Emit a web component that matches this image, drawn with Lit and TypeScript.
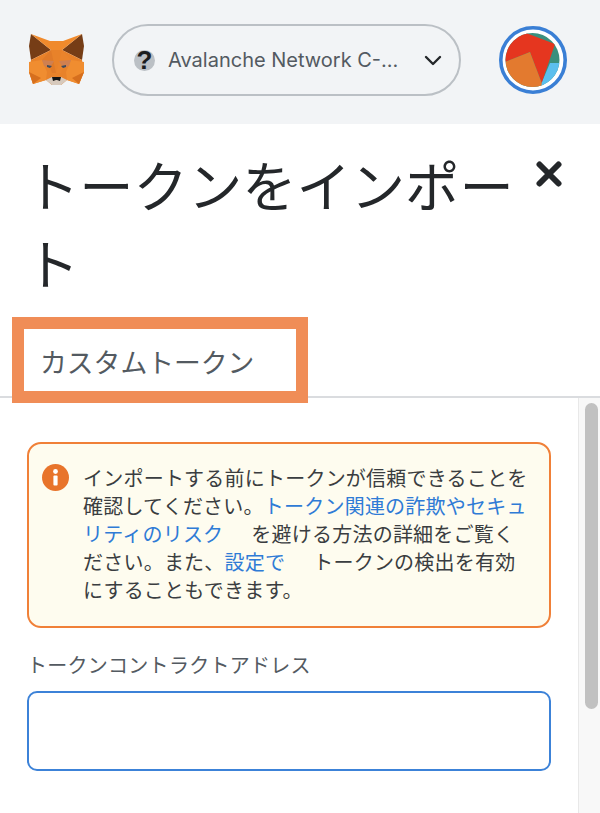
import { LitElement, html, css } from "lit";
import { customElement } from "lit/decorators.js";

@customElement("app-root")
export class AppRoot extends LitElement {
  static styles = css`
    :host {
      display: flex;
      flex-direction: column;
      width: 600px;
      height: 813px;
      overflow: hidden;
      background: #fff;
      font-family: "Noto Sans CJK JP", "Noto Sans", sans-serif;
      color: #24272a;
    }
    .header {
      flex: none;
      height: 124px;
      background: #f2f4f6;
      display: flex;
      align-items: center;
      box-sizing: border-box;
      padding-left: 28px;
    }
    .fox { width: 57px; height: 52px; flex: none; margin-top: -6px; }
    .pill {
      box-sizing: border-box;
      margin-left: 27px;
      width: 349px;
      height: 72px;
      flex: none;
      border: 2px solid #bbc0c5;
      border-radius: 36px;
      display: flex;
      align-items: center;
      padding-left: 20px;
      margin-top: -4px;
    }
    .q {
      width: 21px;
      height: 21px;
      border-radius: 50%;
      background: #bbc0c5;
      color: #1b1d1f;
      font: 700 26px/21px "Liberation Sans", sans-serif;
      text-align: center;
      flex: none;
    }
    .net {
      margin-left: 13px;
      font: 400 20px/24px Inter, "Noto Sans", sans-serif;
      color: #535a61;
      white-space: nowrap;
      width: 237px;
    }
    .chev { width: 18px; height: 11px; flex: none; margin-left: 19px; }
    .avatar { width: 68px; height: 68px; flex: none; margin-left: 38px; margin-top: -4px; }

    .title-row {
      flex: none;
      display: flex;
      align-items: flex-start;
      padding: 21px 0 16px 25px;
    }
    h1 {
      margin: 0;
      width: 501px;
      font-size: 54.3px;
      line-height: 78px;
      font-weight: 400;
      color: #24272a;
    }
    .close { width: 26px; height: 26px; margin: 16px 0 0 10px; flex: none; }

    .tabs {
      flex: none;
      height: 81px;
      box-sizing: border-box;
      border-bottom: 2px solid #dadcdf;
    }
    .tab {
      box-sizing: border-box;
      margin-left: 12px;
      width: 296px;
      height: 86px;
      border: 12px solid #f08d57;
      background: #fff;
      color: #535a61;
      font-size: 26.8px;
      line-height: 62px;
      padding: 2px 0 0 16px;
      white-space: nowrap;
      position: relative;
    }
    .body { flex: 1; min-height: 0; display: flex; overflow: hidden; }
    .content { flex: none; width: 578px; box-sizing: border-box; padding: 44px 27px 0; }
    .track {
      flex: none;
      width: 22px;
      box-sizing: border-box;
      background: #f8f8f8;
      border-left: 1px solid #e8e8e8;
      padding: 5px 2px 0 6px;
    }
    .thumb { height: 306px; background: #c1c1c1; border-radius: 7px; }
    .alert {
      box-sizing: border-box;
      height: 186px;
      border: 2px solid #f08038;
      border-radius: 14px;
      background: #fefcef;
      display: flex;
      padding: 20px 10px 0 13px;
    }
    .info { width: 27px; height: 27px; flex: none; margin-right: 14px; }
    .msg {
      font-size: 20px;
      line-height: 28.1px;
      letter-spacing: 0.22px;
      color: #3a3d40;
      white-space: nowrap;
    }
    .msg a { color: #2f7bd6; text-decoration: none; }
    .gap { display: inline-block; width: 28px; }
    .label {
      font-size: 20px;
      line-height: 28px;
      letter-spacing: 0.27px;
      color: #535a61;
      margin: 23px 0 12px 0;
    }
    .next { margin-top: 41px; }
    .input {
      box-sizing: border-box;
      height: 80px;
      border: 2px solid #3c82d8;
      border-radius: 10px;
      background: #fff;
    }
  `;

  render() {
    return html`
      <div class="header">
        <svg class="fox" viewBox="28 33 57 52">
          <polygon fill="#763d16" points="31,34 51,50 31,60 29,46" />
          <polygon fill="#763d16" points="82,34 62,50 82,60 84,46" />
          <polygon fill="#f08a2c" points="31,34 50,41 63,41 82,34 62,50 51,50" />
          <polygon fill="#e8822a" points="31,60 51,50 62,50 82,60 84,72 79,84 67,80 61,85 52,85 46,80 33,84 29,72" />
          <polygon fill="#f08d30" points="29,62 42,60 47,72 46,80 33,84 29,72" />
          <polygon fill="#f08d30" points="84,62 71,60 66,72 67,80 79,84 84,72" />
          <polygon fill="#e07a28" points="51,50 42,60 50,67 52,73 56,73" />
          <polygon fill="#ea842c" points="62,50 71,60 63,67 61,73 56,73" />
          <polygon fill="#d08050" points="42,60 54,61 50,68 44,66" />
          <polygon fill="#d08050" points="71,60 59,61 63,68 69,66" />
          <polygon fill="#d66f1e" points="33,84 29,72 41,78" />
          <polygon fill="#d66f1e" points="79,84 84,72 72,78" />
          <polygon fill="#3f4a5a" points="47,65 52,66 50,68 47,67" />
          <polygon fill="#3f4a5a" points="66,65 61,66 63,68 66,67" />
          <polygon fill="#d7c9bc" points="46,80 52,77 61,77 67,80 61,85 52,85" />
          <polygon fill="#161616" points="52,77 61,77 60,81 57,80 56,80 53,81" />
        </svg>
        <div class="pill">
          <div class="q">?</div>
          <div class="net">Avalanche Network C-...</div>
          <svg class="chev" viewBox="0 0 18 11">
            <path d="M2 2 L9 9 L16 2" fill="none" stroke="#24272a" stroke-width="2.4" stroke-linecap="round" stroke-linejoin="round" />
          </svg>
        </div>
        <svg class="avatar" viewBox="499 26 68 68">
          <circle cx="533" cy="60" r="32.2" fill="#fff" stroke="#3a7fd5" stroke-width="3.6" />
          <clipPath id="av"><circle cx="532.5" cy="60" r="27" /></clipPath>
          <g clip-path="url(#av)">
            <rect x="500" y="28" width="66" height="66" fill="#3a8f7d" />
            <polygon fill="#5bbfee" points="541,84 550,63 565,63 565,95 541,95" />
            <polygon fill="#e5361f" points="526,33 555,44 541.7,83 530,52 505,62 500,40 520,30" />
            <polygon fill="#e37a2f" points="505,62 530,52 541.7,83 541,95 500,95" />
          </g>
        </svg>
      </div>
      <div class="title-row">
        <h1>トークンをインポート</h1>
        <svg class="close" viewBox="0 0 26 26">
          <path d="M3.5 3.5 L22.5 22.5 M22.5 3.5 L3.5 22.5" stroke="#24272a" stroke-width="6" stroke-linecap="round" />
        </svg>
      </div>
      <div class="tabs"><div class="tab">カスタムトークン</div></div>
      <div class="body">
        <div class="content">
          <div class="alert">
            <svg class="info" viewBox="0 0 27 27">
              <circle cx="13.5" cy="13.5" r="13.5" fill="#e8742b" />
              <circle cx="13.5" cy="7.5" r="2.4" fill="#fff" />
              <rect x="11.4" y="11.5" width="4.2" height="10" rx="1" fill="#fff" />
            </svg>
            <div class="msg">
              インポートする前にトークンが信頼できることを<br />
              確認してください。<a href="#">トークン関連の詐欺やセキュ<br />リティのリスク</a><span class="gap"></span>を避ける方法の詳細をご覧く<br />
              ださい。また、<a href="#">設定で</a><span class="gap"></span>トークンの検出を有効<br />
              にすることもできます。
            </div>
          </div>
          <div class="label">トークンコントラクトアドレス</div>
          <div class="input"></div>
          <div class="label next">トークンシンボル</div>
        </div>
        <div class="track"><div class="thumb"></div></div>
      </div>
    `;
  }
}
